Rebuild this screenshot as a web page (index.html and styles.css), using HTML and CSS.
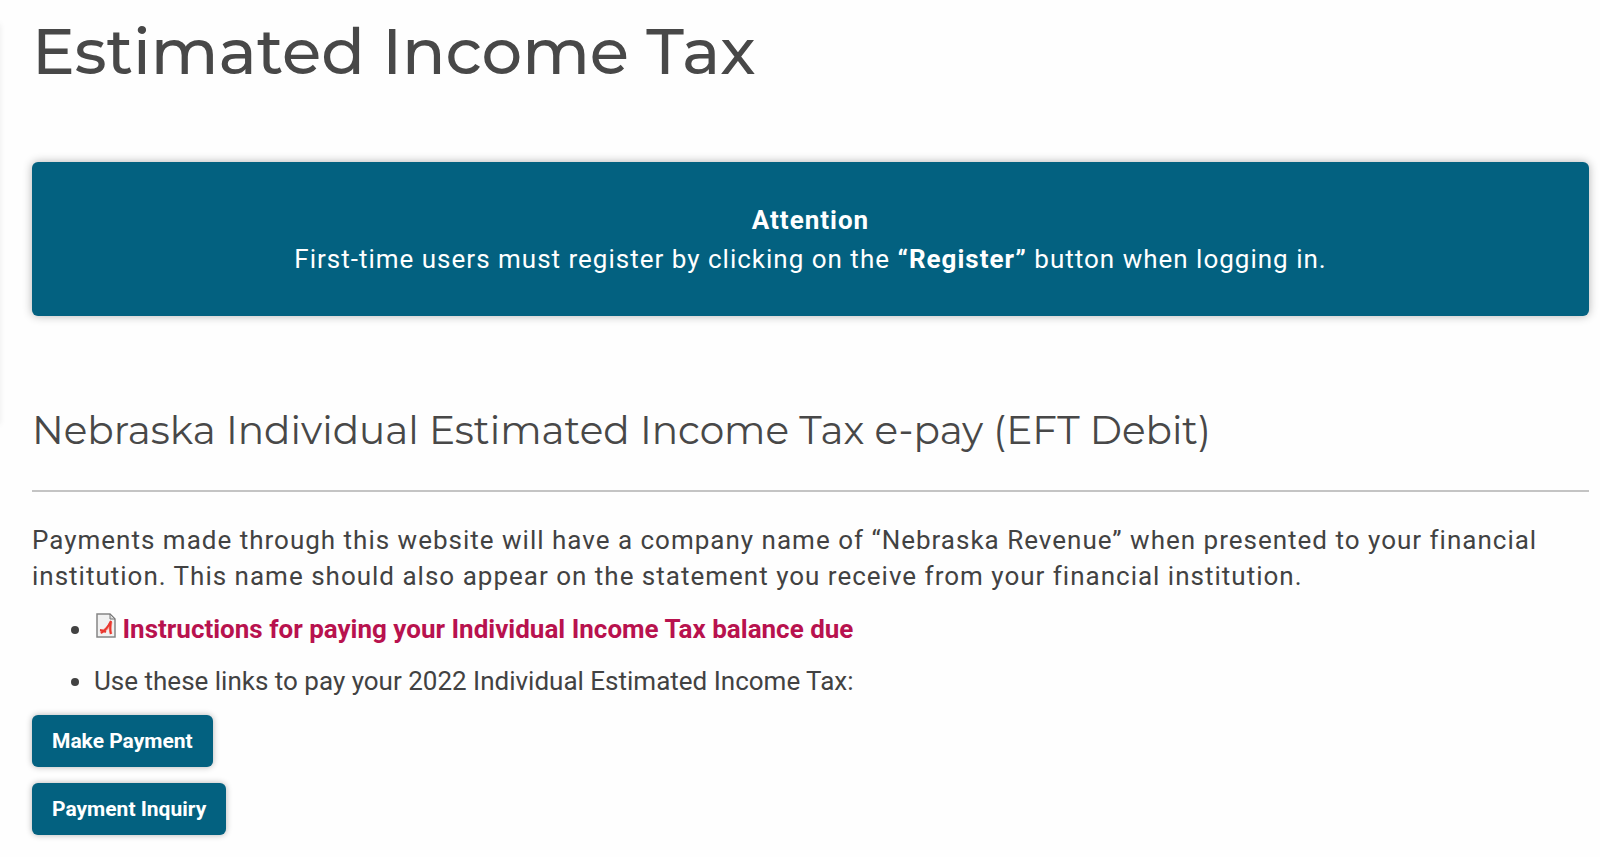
FILE: index.html
```html
<!DOCTYPE html>
<html lang="en">
<head>
    <meta charset="UTF-8">
    <meta name="viewport" content="width=device-width, initial-scale=1.0">
    <title>Estimated Income Tax</title>
    <link rel="stylesheet" href="styles.css">
</head>
<body>
    <div class="side-edge"></div>
    <main class="content">
        <h1>Estimated Income Tax</h1>

        <div class="notice">
            <strong>Attention</strong><br>
            First-time users must register by clicking on the <strong>“Register”</strong> button when logging in.
        </div>

        <h2>Nebraska Individual Estimated Income Tax e-pay (EFT Debit)</h2>
        <hr>

        <p class="intro">Payments made through this website will have a company name of “Nebraska Revenue” when presented to your financial institution. This name should also appear on the statement you receive from your financial institution.</p>

        <ul class="links">
            <li>
                <a href="#">
                    <svg class="pdf-icon" width="20" height="26" viewBox="0 0 20 26" aria-hidden="true">
                        <path d="M1 2h13l5 5v18H1z" fill="#f1f1f1" stroke="#858585" stroke-width="1.5"/>
                        <path d="M14 2v5h5z" fill="#dcdcdc" stroke="#777" stroke-width="1"/>
                        <path d="M4 20c4-1 9-4 11-10-1 5-1 9 0 12" fill="none" stroke="#f6aaa5" stroke-width="3"/>
                        <path d="M4 18c2 0 4 1 6 2M5 21c4-2 7-6 10-12-1 5-1 10 0 13" fill="none" stroke="#e8382f" stroke-width="2"/>
                    </svg>
                    Instructions for paying your Individual Income Tax balance due</a>
            </li>
            <li>Use these links to pay your 2022 Individual Estimated Income Tax:</li>
        </ul>

        <div class="actions">
            <button type="button">Make Payment</button>
            <button type="button">Payment Inquiry</button>
        </div>
    </main>
</body>
</html>
```

FILE: styles.css
```css
* {
    margin: 0;
    padding: 0;
    box-sizing: border-box;
}

body {
    font-family: Roboto, Arial, sans-serif;
    font-size: 26px;
    line-height: 36px;
    color: #424242;
    background: #fefefe;
}

/* shadow of the column to the left of the content */
.side-edge {
    position: absolute;
    top: 24px;
    left: -8px;
    width: 8px;
    height: 400px;
    box-shadow: 0 0 6px rgba(0, 0, 0, 0.08);
}

.content {
    padding: 11px 11px 20px 32px;
}

h1,
h2 {
    font-family: Montserrat, Inter, sans-serif;
    color: #484848;
}

h1 {
    font-size: 64px;
    font-weight: 500;
    line-height: 80px;
}

.notice {
    margin-top: 71px;
    padding: 39px 20px 37px;
    border-radius: 6px;
    background: #036180;
    color: #fff;
    line-height: 39px;
    letter-spacing: 1px;
    text-align: center;
    box-shadow: 0 0 10px rgba(0, 0, 0, 0.3);
}

h2 {
    margin-top: 89px;
    font-size: 39px;
    font-weight: 400;
    line-height: 50px;
}

hr {
    margin: 35px 0 30px;
    border: 0;
    border-top: 2px solid #c4c4c4;
}

.intro {
    letter-spacing: 1px;
}

.links {
    margin-top: 17px;
    padding-left: 62px;
}

.links li {
    margin-bottom: 16px;
}

.links a {
    color: #b8124e;
    font-weight: 700;
    text-decoration: none;
}

.pdf-icon {
    margin-left: 2px;
}

.actions {
    display: flex;
    flex-direction: column;
    align-items: flex-start;
    gap: 16px;
}

button {
    height: 52px;
    padding: 0 20px;
    border: 0;
    border-radius: 6px;
    background: #036180;
    color: #fff;
    font-family: inherit;
    font-size: 21px;
    font-weight: 700;
    box-shadow: 0 0 6px rgba(0, 0, 0, 0.3);
    cursor: pointer;
}
```
